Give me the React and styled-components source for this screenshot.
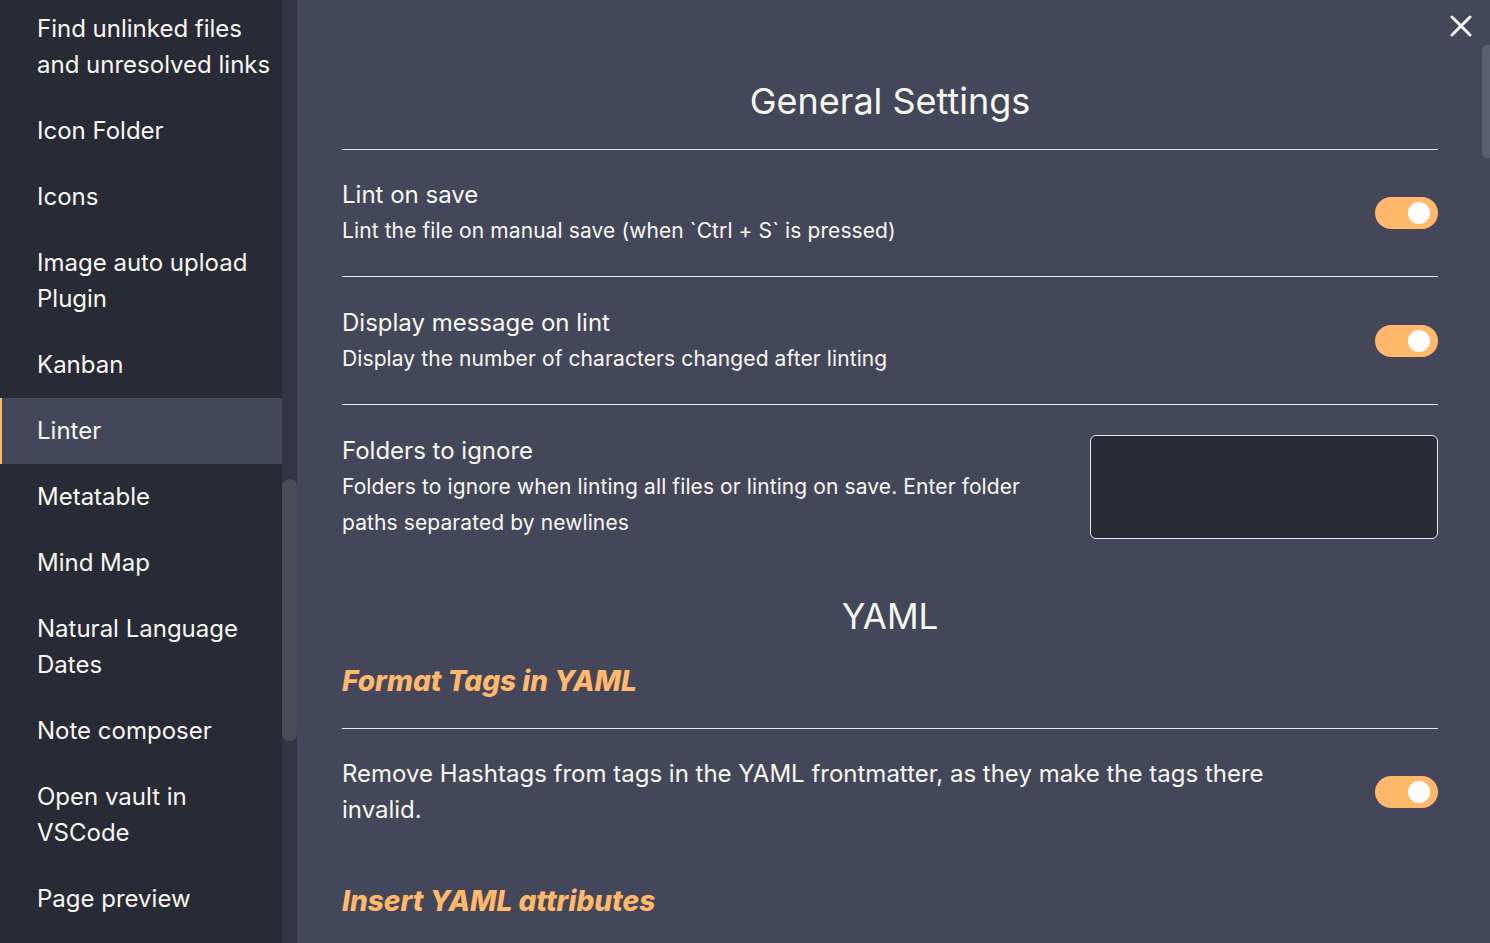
import React from 'react';
import styled, { createGlobalStyle } from 'styled-components';

const GlobalStyle = createGlobalStyle`
	html, body {
		margin: 0;
		padding: 0;
		background: #44475a;
		font-family: Inter, "Noto Sans", sans-serif;
		color: #f8f8f2;
	}
	* {
		box-sizing: border-box;
	}
`;

const Page = styled.div`
	display: flex;
	height: 100vh;
	overflow: hidden;
`;

const Sidebar = styled.nav`
	display: flex;
	width: 297px;
	flex-shrink: 0;
	background: #282a36;
`;

const NavList = styled.div`
	flex: 1;
	margin-top: -4px;
`;

const NavItem = styled.div`
	font-size: 24px;
	line-height: 36px;
	padding: 15px 8px 15px 37px;
	color: #f8f8f2;
	background: ${(p) => (p.$active ? '#44475a' : 'transparent')};
	box-shadow: ${(p) => (p.$active ? 'inset 2px 0 0 #ffb86c' : 'none')};
`;

const Track = styled.div`
	width: 15px;
	background: #343544;
	padding-top: 479px;
`;

const Thumb = styled.div`
	height: ${(p) => p.$h}px;
	background: #4b4c59;
	border-radius: 8px;
`;

const Content = styled.main`
	flex: 1;
	display: flex;
	position: relative;
	background: #44475a;
`;

const Column = styled.div`
	flex: 1;
	padding: 0 44px 0 45px;
`;

const RightTrack = styled.div`
	width: 8px;
	padding-top: 45px;
`;

const RightThumb = styled.div`
	height: 113px;
	background: #5c5e72;
	border-radius: 5px 0 0 5px;
`;

const CloseButton = styled.button`
	position: absolute;
	top: 15px;
	right: 18px;
	width: 22px;
	height: 22px;
	padding: 0;
	border: none;
	background: none;
	cursor: pointer;
	display: flex;
`;

const PageTitle = styled.h2`
	margin: 0;
	padding: 77px 0 24px;
	font-size: 36px;
	font-weight: 400;
	line-height: 48px;
	text-align: center;
	border-bottom: 1px solid #e6e6e6;
`;

const Row = styled.div`
	display: flex;
	align-items: center;
	gap: 50px;
	padding: 27px 0;
	border-bottom: ${(p) => (p.$divider ? '1px solid #e6e6e6' : 'none')};
	& + & {
		padding-top: 28px;
	}
`;

const Info = styled.div`
	flex: 1;
	min-width: 0;
`;

const Name = styled.div`
	font-size: 24px;
	line-height: 36px;
`;

const Desc = styled.div`
	font-size: 21px;
	line-height: 36px;
	letter-spacing: 0.1px;
`;

const Toggle = styled.div`
	width: 63px;
	height: 32px;
	border-radius: 16px;
	background: #ffb86c;
	display: flex;
	align-items: center;
	justify-content: flex-end;
	padding-right: 8px;
	flex-shrink: 0;
`;

const Knob = styled.div`
	width: 22px;
	height: 22px;
	border-radius: 50%;
	background: #fff;
`;

const TextArea = styled.textarea`
	width: 348px;
	height: 104px;
	flex-shrink: 0;
	background: #282a36;
	border: 1px solid #e6e6e6;
	border-radius: 6px;
	resize: none;
	color: #f8f8f2;
	font-family: inherit;
`;

const SectionTitle = styled.h3`
	margin: 24px 0 0;
	font-size: 35px;
	font-weight: 400;
	line-height: 48px;
	text-align: center;
`;

const GroupTitle = styled.h4`
	margin: ${(p) => (p.$first ? '23px' : '28px')} 0 0;
	padding-bottom: ${(p) => (p.$divider ? '29px' : '0')};
	border-bottom: ${(p) => (p.$divider ? '1px solid #e6e6e6' : 'none')};
	font-size: 28px;
	font-weight: 800;
	font-style: italic;
	line-height: 36px;
	color: #ffb86c;
`;

const navItems = [
	'Find unlinked files and unresolved links',
	'Icon Folder',
	'Icons',
	'Image auto upload Plugin',
	'Kanban',
	'Linter',
	'Metatable',
	'Mind Map',
	'Natural Language Dates',
	'Note composer',
	'Open vault in VSCode',
	'Page preview',
];

function Switch() {
	return (
		<Toggle>
			<Knob />
		</Toggle>
	);
}

export default function App() {
	return (
		<Page>
			<GlobalStyle />
			<Sidebar>
				<NavList>
					{navItems.map((item) => (
						<NavItem key={item} $active={item === 'Linter'}>
							{item}
						</NavItem>
					))}
				</NavList>
				<Track>
					<Thumb $h={262} />
				</Track>
			</Sidebar>
			<Content>
				<Column>
					<PageTitle>General Settings</PageTitle>
					<Row $divider>
						<Info>
							<Name>Lint on save</Name>
							<Desc>Lint the file on manual save (when `Ctrl + S` is pressed)</Desc>
						</Info>
						<Switch />
					</Row>
					<Row $divider>
						<Info>
							<Name>Display message on lint</Name>
							<Desc>Display the number of characters changed after linting</Desc>
						</Info>
						<Switch />
					</Row>
					<Row>
						<Info>
							<Name>Folders to ignore</Name>
							<Desc>
								Folders to ignore when linting all files or linting on save. Enter folder paths separated by newlines
							</Desc>
						</Info>
						<TextArea />
					</Row>
					<SectionTitle>YAML</SectionTitle>
					<GroupTitle $first $divider>Format Tags in YAML</GroupTitle>
					<Row>
						<Info>
							<Name>
								Remove Hashtags from tags in the YAML frontmatter, as they make the tags there invalid.
							</Name>
						</Info>
						<Switch />
					</Row>
					<GroupTitle>Insert YAML attributes</GroupTitle>
				</Column>
				<RightTrack>
					<RightThumb />
				</RightTrack>
				<CloseButton aria-label="Close">
					<svg width="22" height="22" viewBox="0 0 22 22">
						<path d="M2 2 L20 20 M20 2 L2 20" stroke="#f8f8f2" strokeWidth="3" strokeLinecap="round" />
					</svg>
				</CloseButton>
			</Content>
		</Page>
	);
}
